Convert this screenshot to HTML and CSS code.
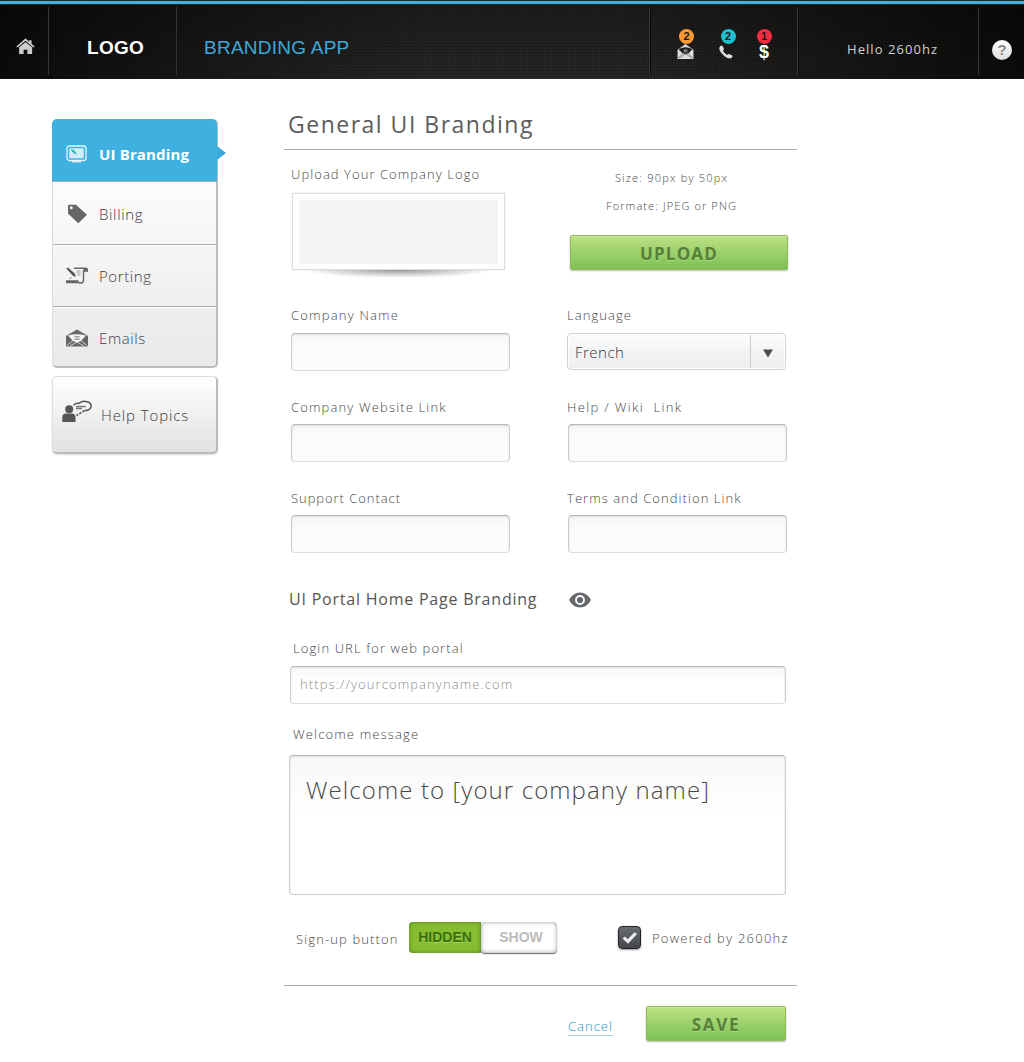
FILE: index.html
```html
<!DOCTYPE html>
<html lang="en">
<head>
<meta charset="utf-8">
<title>Branding App</title>
<link rel="stylesheet" href="styles.css">
</head>
<body>
<header class="topbar">
  <a class="home"><svg width="19" height="17" viewBox="0 0 20 17"><path d="M1 9 L10 1.2 L19 9" fill="none" stroke="#ddd" stroke-width="1.6"/><path d="M14 1.800h2.300v4L14 3.800z" fill="#ddd"/><path d="M3.300 9.300 10 3.800l7 5.500V16.400h-5v-4.600H8v4.600H3.300z" fill="#ccc"/></svg></a>
  <div class="logo"><span>LOGO</span></div>
  <div class="app-name"><span>BRANDING APP</span></div>
  <nav class="alerts">
    <a class="alert mail"><b class="badge orange">2</b><svg width="17" height="15" viewBox="0 0 17 16"><path d="M0 6 8.500 0 17 6v10H0z" fill="#ddd"/><path d="M1 5.500 Q8.500 1.500 16 5.500 L12 9.500 8.500 11 5 9.500z" fill="#20201e"/><path d="M6.500 5.500h4v3.500h-4z" fill="#777"/><path d="M0 15.500 6.500 9.500M17 15.500 10.500 9.500M2 14.800 8.500 10.500 15 14.800" fill="none" stroke="#777" stroke-width=".8"/></svg></a>
    <a class="alert calls"><b class="badge teal">2</b><svg width="14" height="14" viewBox="0 0 14 14"><path d="M1 1.500 Q2.500 -.3 3.800 1.200 L5 4 Q5 5 3.800 5.600 Q5 8.500 8.300 10 Q9 8.800 10 9 L13.200 10.600 Q14 11.500 12.800 12.700 Q10 14.800 5.500 11.200 Q0 6.500 .3 3z" fill="#ddd"/></svg></a>
    <a class="alert"><b class="badge red">1</b><span class="dollar">$</span></a>
  </nav>
  <div class="hello"><span>Hello 2600hz</span></div>
  <a class="help"><b>?</b></a>
</header>
<div class="page">
  <aside class="sidebar">
    <nav class="menu">
      <a class="item active"><svg width="22" height="18" viewBox="0 0 22 18"><rect x="1" y="1" width="19" height="14.500" rx="2.500" fill="none" stroke="#e6f6fd" stroke-width="1.300"/><rect x="3.300" y="3.200" width="14.400" height="10" rx="1" fill="#d3eefa"/><path d="M6 16.800h9" stroke="#e6f6fd" stroke-width="1.300"/><path d="M4.500 4.200l3.500 1 3 4.500L7.500 8z" fill="#2a9bce"/></svg><span>UI Branding</span></a>
      <a class="item"><svg width="22" height="20" viewBox="0 0 22 20"><path d="M2 2 Q2 .7 3.300 .7 H10 L21 10.800 12.300 19.300 2 9.500z" fill="#666"/><circle cx="5.300" cy="3.800" r="1.500" fill="#f7f7f7"/></svg><span>Billing</span></a>
      <a class="item raised"><svg width="22" height="17" viewBox="0 0 22 17"><path d="M8 1.200H19.500Q21.500 1.200 21.300 4H17.500V13Q17.500 16 15 16H13" fill="none" stroke="#666" stroke-width="1.400"/><path d="M17.500 1h4v3h-4z" fill="#666"/><path d="M0 13.200h12.500Q12.500 16 15 16.200H0z" fill="#666"/><path d="M.3 1.500 2 .5 8.800 6.500 9.800 10 6.800 8.800z" fill="#555"/><path d="M3 12 6 10.500M10.500 4h4M10.500 6h4M11.500 8h3" stroke="#999"/></svg><span>Porting</span></a>
      <a class="item raised"><svg width="22" height="18" viewBox="0 0 22 18"><path d="M0 7 11 .5 22 7v10.500H0z" fill="#666"/><path d="M2 6.500Q11 3.800 20 6.500L15 12 11 13.500 7 12z" fill="#f3f3f3"/><path d="M8.500 7.500h5M8.500 9h5M8.500 10.500h5" stroke="#888" stroke-width=".8"/><path d="M.5 17 7 11.500M21.500 17 15 11.500M4 17l7-4 7 4" fill="none" stroke="#e8e8e8" stroke-width=".8"/></svg><span>Emails</span></a>
    </nav>
    <a class="topics"><svg width="31" height="23" viewBox="0 0 31 23"><circle cx="7.200" cy="9.200" r="4" fill="#555"/><path d="M.3 22V17.500Q.3 13.500 4 13.500H10Q13.500 13.500 13.500 17.500V22z" fill="#555"/><path d="M11.500 5.500Q13 2.500 17 3.300Q21 0 25 1.800Q30 3 29 7Q27.500 11 22.500 10.500" fill="none" stroke="#555" stroke-width="1.500"/><path d="M14 6.500h10M14 8.500h6" stroke="#777" stroke-width="1.300"/><path d="M22.500 10.500 14.500 15.500" stroke="#555" stroke-width="1.600" stroke-dasharray="2.500 1.300"/></svg><span>Help Topics</span></a>
  </aside>
  <main class="content">
    <h1><span>General UI Branding</span></h1>
    <section class="fields">
      <div class="upload-logo"><label>Upload Your Company Logo</label><div class="frame"><div class="preview"></div></div></div>
      <div class="upload"><p class="size">Size: 90px by 50px</p><p class="format">Formate: JPEG or PNG</p><button class="btn">UPLOAD</button></div>
      <div class="field"><label class="name">Company Name</label><div class="input"></div></div>
      <div class="field"><label>Language</label><div class="select"><span>French</span><i><svg width="10" height="9" viewBox="0 0 10 9"><path d="M0 .5h10L5 8.500z" fill="#4d4d4d"/></svg></i></div></div>
      <div class="field"><label class="site">Company Website Link</label><div class="input"></div></div>
      <div class="field right"><label class="wiki">Help / Wiki&nbsp; Link</label><div class="input"></div></div>
      <div class="field"><label class="contact">Support Contact</label><div class="input"></div></div>
      <div class="field right"><label>Terms and Condition Link</label><div class="input"></div></div>
    </section>
    <h2><span>UI Portal Home Page Branding</span><svg width="22" height="16" viewBox="0 0 22 16"><path d="M0 8Q4 .5 11 .5T22 8Q18 15.500 11 15.500T0 8z" fill="#666a6f"/><circle cx="11" cy="8" r="4" fill="none" stroke="#fff" stroke-width="1.800"/></svg></h2>
    <label class="wide">Login URL for web portal</label>
    <div class="input url"><span>https://yourcompanyname.com</span></div>
    <label class="wide welcome">Welcome message</label>
    <div class="message">Welcome to [your company name]</div>
    <div class="options">
      <label class="signup">Sign-up button</label>
      <div class="toggle"><b class="on">HIDDEN</b><b class="off">SHOW</b></div>
      <div class="check"><svg width="17" height="14" viewBox="0 0 17 14"><path d="M1.500 7.500 4 5.500 6.700 8.300 13.500 1.200 16 3 7 12.800z" fill="#eee"/></svg></div>
      <label class="powered">Powered by 2600hz</label>
    </div>
    <footer class="actions"><a class="cancel"><span>Cancel</span></a><button class="btn save">SAVE</button></footer>
  </main>
</div>
</body>
</html>
```
FILE: styles.css
```css
* { box-sizing: border-box; }
body { margin: 0; width: 1024px; height: 1062px; background: #fff; color: #484848; font-family: "Open Sans", "Noto Sans", sans-serif; font-size: 13px; font-weight: 300; overflow: hidden; }
h1, h2, p { margin: 0; }
svg { display: block; flex: none; }
span, label, p { white-space: nowrap; }
button { font-family: inherit; }

.topbar { display: flex; height: 79px; padding-top: 6px; border-top: 1px solid #262626;
  background:
    linear-gradient(#3fb2e2 0 3px, #12262f 3px 4px, transparent 4px),
    linear-gradient(90deg, rgba(0,0,0,.7), rgba(0,0,0,.35) 20%, transparent 42%, transparent 60%, rgba(0,0,0,.35) 80%, rgba(0,0,0,.7)),
    repeating-linear-gradient(90deg, rgba(0,0,0,.16) 0 1px, transparent 1px 3px),
    repeating-linear-gradient(rgba(0,0,0,.14) 0 1px, transparent 1px 3px),
    linear-gradient(#1d1c1b, #292826); }
.topbar > * { display: flex; align-items: center; height: 68px; border-right: 1px solid #363635; box-shadow: 1px 0 #0d0d0d; }
.home { width: 49px; padding: 10px 0 0 16px; }
.logo { width: 128px; padding: 14px 0 0 38px; color: #fff; font: bold 19px "Liberation Sans", Arial, sans-serif; letter-spacing: .3px; }
.app-name { width: 473px; padding: 14px 0 0 27px; color: #3ba9da; font: 19px "Liberation Sans", Arial, sans-serif; letter-spacing: .25px; }
.alerts { width: 148px; padding: 12px 0 0 25px; }
.alert { display: flex; flex-direction: column; align-items: center; width: 20px; height: 36px; }
.mail .badge { margin-left: 3px; }
.calls { margin: 0 18px 0 21px; }
.calls .badge { margin-left: 4px; }
.badge { width: 15px; height: 15px; flex: none; border-radius: 50%; color: #171717; font: bold 11px/15px "Liberation Sans", sans-serif; text-align: center; }
.calls svg { margin-top: 1px; }
.orange { background: #ff9a35; }
.teal { background: #1fbfd0; }
.red { background: #f32c40; }
.dollar { color: #fff; font: bold 18px/16px "Liberation Sans", sans-serif; }
.hello { width: 181px; padding: 16px 0 0 49px; color: #d0d0d0; font-size: 13px; font-weight: 400; letter-spacing: 1.05px; }
.topbar > .help { border: 0; box-shadow: none; padding: 17px 0 0 13px; }
.help b { width: 20px; height: 20px; border-radius: 50%; background: linear-gradient(#fff, #ddd); color: #888; font: bold 15px/20px "Liberation Sans", sans-serif; text-align: center; }

.page { display: flex; }
.sidebar { width: 166px; margin: 40px 66px 0 52px; color: #3c3c3c; font-size: 15px; letter-spacing: .65px; }
.menu { height: 249px; border-radius: 5px; background: linear-gradient(#fcfcfc 60px, #e9e9e9); border: 1px solid #ddd; border-right: 2px solid #bbb; border-bottom: 2px solid #bbb; }
.item { display: flex; align-items: center; height: 62px; padding: 2px 0 0 13px; gap: 11px; border-bottom: 1px solid #aaa; box-shadow: inset 0 1px #fff; }
.active + .item { height: 63px; }
.raised { padding-top: 0; letter-spacing: .6px; }
.item:last-child { border: 0; height: 61px; }
.active { position: relative; height: 63px; margin: -1px -1px 0; padding: 8px 0 0 14px; border-radius: 5px 5px 0 0; background: #3fb1e1; color: #fff; font-weight: 700; letter-spacing: .15px; box-shadow: none; }
.active::after { content: ""; position: absolute; right: -9px; top: 27px; border: 7px solid transparent; border-left: 9px solid #3aa9d9; border-right: 0; }
.topics { display: flex; height: 78px; margin-top: 8px; padding: 0 0 0 9px; gap: 8px; align-items: center; border-radius: 5px; border: 1px solid #ddd; border-right: 2px solid #bbb; border-bottom: 2px solid #bbb; background: linear-gradient(#fff, #e1e1e1); box-shadow: 0 1px 2px #ddd; letter-spacing: .9px; }
.topics svg { margin-top: -7px; }

.content { width: 513px; }
h1 { height: 71px; padding: 29px 0 0 4px; border-bottom: 1px solid #aaa; color: #5c5c5c; font-size: 23px; font-weight: 400; line-height: 32px; letter-spacing: 1.5px; }
.fields { display: grid; grid-template-columns: 219px 220px; grid-template-rows: 155px 92px 91px 91px; column-gap: 57px; padding-left: 7px; }
label { display: block; height: 20px; line-height: 20px; letter-spacing: 1.06px; }
.name { letter-spacing: 1.2px; }
.site { letter-spacing: 1.15px; }
.wiki { letter-spacing: 1.35px; }
.contact { letter-spacing: .95px; }
.upload-logo { padding-top: 14px; }
.frame { position: relative; width: 213px; height: 77px; margin: 9px 0 0 1px; padding: 6px; border: 1px solid #ddd; box-shadow: 0 0 1px #ddd; background: #fff; }
.frame::after { content: ""; position: absolute; left: 10px; right: 10px; top: 76px; height: 8px; background: radial-gradient(ellipse at 50% 0, rgba(90,100,95,.65), transparent 70%); }
.preview { height: 64px; background: #f4f4f4; }
.upload { font-size: 11px; text-align: center; letter-spacing: 1.1px; }
.upload p { height: 28px; line-height: 28px; margin-right: 11px; }
.upload .size { margin-top: 14px; letter-spacing: 1.2px; }
.btn { display: block; width: 218px; height: 35px; margin: 15px 0 0 3px; padding: 1px 0 0; border: 1px solid #92b957; border-radius: 2px; background: linear-gradient(#bce083, #7dc256); box-shadow: inset 0 1px #cbe59c, 0 1px 2px #bbb; color: #57803a; font-size: 17px; font-weight: 700; letter-spacing: 1.2px; text-shadow: 0 1px #aad977; }
.input { width: 219px; height: 38px; margin-top: 8px; border: 1px solid #ccc; border-top-color: #b8b8b8; border-bottom-color: #ddd; border-radius: 4px; background: linear-gradient(#f6f6f6, #fcfcfc 40%); box-shadow: inset 0 1px 2px #ddd; }
.field:nth-child(n+5) .input { margin-top: 7px; }
.right .input { margin-left: 1px; }
.select { display: flex; align-items: center; justify-content: space-between; width: 219px; height: 37px; margin-top: 8px; padding-left: 7px; border: 1px solid #d2d2d2; border-radius: 4px; background: linear-gradient(#fbfcfc, #ebedee); box-shadow: inset 0 0 0 1px #fff; color: #333; font-size: 15px; letter-spacing: .5px; }
.select i { display: flex; align-items: center; justify-content: center; width: 35px; height: 33px; padding-top: 3px; border-left: 1px solid #ccc; }
h2 { display: flex; align-items: center; height: 24px; margin-top: 8px; padding-left: 5px; color: #555; font-size: 16px; font-weight: 400; letter-spacing: .78px; }
h2 span { width: 280px; }
h2 svg { margin-top: 2px; }
.wide { margin: 27px 0 0 9px; letter-spacing: 1.1px; }
.welcome { margin-top: 20px; letter-spacing: 1.15px; }
.url { display: flex; align-items: center; width: 496px; margin: 8px 0 0 6px; padding: 0 0 2px 9px; color: #8c8c8c; background: linear-gradient(#f8f8f8, #fff 40%); letter-spacing: 1.1px; }
.message { width: 497px; height: 140px; margin: 11px 0 0 5px; padding: 16px; border: 1px solid #ccc; border-top-color: #b8b8b8; border-radius: 4px; background: linear-gradient(#f8f8f8, #fff 60px); box-shadow: inset 0 1px 2px #ddd; font-size: 24px; line-height: 36px; letter-spacing: 1.1px; }
.options { display: flex; align-items: center; height: 32px; margin-top: 26px; padding-left: 12px; }
.options label { padding-top: 2px; height: 22px; }
.options .signup { width: 113px; padding-top: 3px; letter-spacing: 1.12px; }
.toggle { display: flex; width: 209px; font-family: "Liberation Sans", sans-serif; font-size: 14px; }
.toggle b { display: flex; align-items: center; justify-content: center; height: 31px; font-weight: 700; }
.on { width: 72px; border-radius: 4px 0 0 4px; background: #87bd30; color: #38700b; box-shadow: inset 0 0 4px #527d18; text-shadow: 0 1px #a5d35c; }
.off { width: 76px; padding-left: 4px; border-radius: 4px; background: #fff; color: #bbb; box-shadow: inset 0 0 4px #999, 0 1px 1px #666; }
.check { display: flex; align-items: center; justify-content: center; width: 23px; height: 23px; margin-top: 1px; border: 1px solid #222; border-radius: 4px; background: linear-gradient(#686b70, #43464b); box-shadow: 0 1px 2px #999; }
.options .powered { margin-left: 11px; letter-spacing: 1.25px; }
.actions { display: flex; margin-top: 32px; padding-top: 20px; border-top: 1px solid #aaa; }
.cancel { width: 78px; margin-left: 284px; padding-top: 11px; color: #2097cc; letter-spacing: 1px; }
.cancel span { border-bottom: 1px solid #9fd5ec; line-height: 16px; }
.save { width: 140px; margin: 0; letter-spacing: 1.7px; }
```
